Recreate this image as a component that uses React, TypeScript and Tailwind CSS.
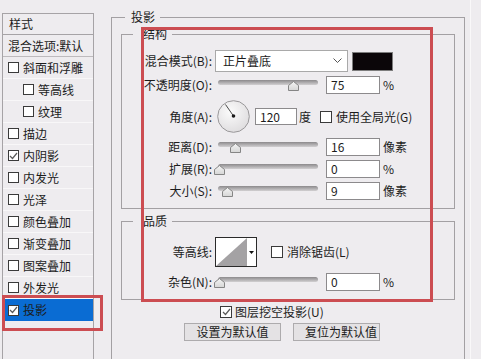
import React from "react";

function Check({ checked, size = "h-[12px] w-[12px]", className = "" }: { checked?: boolean; size?: string; className?: string }) {
  return (
    <span className={`inline-flex shrink-0 items-center justify-center border border-[#3a3a3a] bg-white ${size} ${className}`}>
      {checked && (
        <svg width="9" height="8" viewBox="0 0 9 8">
          <polyline points="1,4 3.5,6.5 8,1" fill="none" stroke="#5a5a5a" strokeWidth="1.2" />
        </svg>
      )}
    </span>
  );
}

function Slider({ thumb }: { thumb: string }) {
  return (
    <div className="relative ml-[6px] h-[18px] w-[100px] shrink-0">
      <div className="absolute left-0 right-0 top-[4px] h-[5px] rounded-full bg-gradient-to-b from-[#8c8a8c] to-[#d2d0d2]" />
      <svg className={`absolute top-[5px] ${thumb}`} width="11" height="10" viewBox="0 0 11 10">
        <defs>
          <linearGradient id="tg" x1="0" y1="0" x2="0" y2="1">
            <stop offset="0" stopColor="#f4f4f4" />
            <stop offset="1" stopColor="#d6d6d6" />
          </linearGradient>
        </defs>
        <polygon points="0.5,9.5 0.5,4.5 5.5,0.5 10.5,4.5 10.5,9.5" fill="url(#tg)" stroke="#858585" strokeWidth="1" />
      </svg>
    </div>
  );
}

function Input({ value, w = "w-[54px]", h = "h-[18px]", className = "" }: { value: string; w?: string; h?: string; className?: string }) {
  return (
    <div className={`flex shrink-0 items-center border border-[#8c8a8c] bg-white pl-[4px] ${w} ${h} ${className}`}>{value}</div>
  );
}

function Label({ text }: { text: string }) {
  return <div className="w-[90px] shrink-0 text-right">{text}</div>;
}

const items: { t: string; sub?: boolean; c?: boolean; sel?: boolean }[] = [
  { t: "斜面和浮雕" },
  { t: "等高线", sub: true },
  { t: "纹理", sub: true },
  { t: "描边" },
  { t: "内阴影", c: true },
  { t: "内发光" },
  { t: "光泽" },
  { t: "颜色叠加" },
  { t: "渐变叠加" },
  { t: "图案叠加" },
  { t: "外发光" },
  { t: "投影", c: true, sel: true },
];

export default function App() {
  return (
    <div className="relative flex h-[359px] w-[481px] overflow-hidden bg-[#eeecef] font-[family-name:'Noto_Sans_CJK_SC',sans-serif] text-[12px] leading-[16px] text-[#1c1c1c]">
      {/* Left style list */}
      <div className="ml-[2px] mt-[13px] flex h-[350px] w-[92px] shrink-0 flex-col border border-[#a6a3a6]">
        <div className="flex h-[21px] shrink-0 items-center border-b border-[#a6a3a6] pl-[6px]">样式</div>
        <div className="flex h-[22px] shrink-0 items-center border-b border-[#bdbabd] pl-[5px]">混合选项:默认</div>
        {items.map((it) => (
          <div
            key={it.t}
            className={`flex h-[22px] shrink-0 items-center ${it.sel ? "bg-[#0a6cd3]" : "border-b border-[#f8f7f8]"}`}
          >
            <Check checked={it.c} size="h-[11px] w-[11px]" className={it.sub ? "ml-[20px]" : "ml-[5px]"} />
            <span className="ml-[4px]">{it.t}</span>
          </div>
        ))}
      </div>

      {/* Drop shadow group */}
      <fieldset className="ml-[17px] mt-[9px] h-[360px] w-[354px] shrink-0 border border-[#a3a0a3] px-[9px]">
        <legend className="ml-[4px] pl-[6px] pr-[5px]">投影</legend>

        <fieldset className="mt-[1px] border border-[#a3a0a3] pb-[8px]">
          <legend className="ml-[11px] pl-[10px] pr-[5px]">结构</legend>

          <div className="mt-[8px] flex h-[22px] items-center">
            <Label text="混合模式(B):" />
            <div className="ml-[3px] flex h-[22px] w-[133px] shrink-0 items-center justify-between border border-[#a9a9a9] bg-white pl-[7px] pr-[5px]">
              <span>正片叠底</span>
              <svg width="9" height="6" viewBox="0 0 9 6">
                <polyline points="0.5,0.5 4.5,4.5 8.5,0.5" fill="none" stroke="#555" strokeWidth="1" />
              </svg>
            </div>
            <div className="ml-[4px] h-[19px] w-[41px] shrink-0 border border-[#7d7d7d] bg-[#0b0609]" />
          </div>

          <div className="mt-[4px] flex h-[18px] items-center">
            <Label text="不透明度(O):" />
            <Slider thumb="left-[70px]" />
            <Input value="75" className="ml-[8px]" />
            <span className="ml-[3px]">%</span>
          </div>

          <div className="mt-[6px] flex h-[33px] items-center">
            <Label text="角度(A):" />
            <svg className="ml-[5px] shrink-0" width="33" height="33" viewBox="0 0 33 33">
              <defs>
                <radialGradient id="dg" cx="0.4" cy="0.35" r="0.7">
                  <stop offset="0" stopColor="#fbfbfb" />
                  <stop offset="1" stopColor="#dedcde" />
                </radialGradient>
              </defs>
              <circle cx="16.5" cy="16.5" r="15.8" fill="url(#dg)" stroke="#9a989a" strokeWidth="1" />
              <line x1="16.5" y1="16" x2="8.5" y2="4.5" stroke="#4a4a4a" strokeWidth="1" />
              <circle cx="16.5" cy="16" r="1.8" fill="#1a1a1a" />
            </svg>
            <Input value="120" w="w-[42px]" h="h-[17px]" className="ml-[5px]" />
            <span className="ml-[2px]">度</span>
            <Check className="ml-[9px]" />
            <span className="ml-[4px]">使用全局光(G)</span>
          </div>

          <div className="mt-[5px] flex h-[18px] items-center">
            <Label text="距离(D):" />
            <Slider thumb="left-[12px]" />
            <Input value="16" className="ml-[8px]" />
            <span className="ml-[3px]">像素</span>
          </div>

          <div className="mt-[4px] flex h-[18px] items-center">
            <Label text="扩展(R):" />
            <Slider thumb="left-[-4px]" />
            <Input value="0" className="ml-[8px]" />
            <span className="ml-[3px]">%</span>
          </div>

          <div className="mt-[4px] flex h-[18px] items-center">
            <Label text="大小(S):" />
            <Slider thumb="left-[4px]" />
            <Input value="9" className="ml-[8px]" />
            <span className="ml-[3px]">像素</span>
          </div>
        </fieldset>

        <fieldset className="mt-[4px] border border-[#a3a0a3] pb-[8px]">
          <legend className="ml-[11px] pl-[10px] pr-[5px]">品质</legend>

          <div className="mt-[8px] flex h-[30px] items-center">
            <Label text="等高线:" />
            <div className="ml-[3px] flex h-[30px] w-[42px] shrink-0 border border-[#2a2a2a] bg-white">
              <svg width="31" height="28" viewBox="0 0 31 28" className="shrink-0">
                <polygon points="0,28 31,0 31,28" fill="#a4a2a4" />
              </svg>
              <div className="flex flex-1 items-center justify-center">
                <svg width="5" height="3" viewBox="0 0 5 3">
                  <polygon points="0,0 5,0 2.5,3" fill="#111" />
                </svg>
              </div>
            </div>
            <Check className="ml-[14px]" />
            <span className="ml-[4px]">消除锯齿(L)</span>
          </div>

          <div className="mt-[6px] flex h-[18px] items-center">
            <Label text="杂色(N):" />
            <Slider thumb="left-[-4px]" />
            <Input value="0" className="ml-[8px]" />
            <span className="ml-[3px]">%</span>
          </div>
        </fieldset>

        <div className="mt-[4px] flex h-[16px] items-center pl-[99px]">
          <Check checked />
          <span className="ml-[3px]">图层挖空投影(U)</span>
        </div>

        <div className="mt-[3px] flex h-[18px] pl-[63px]">
          <div className="flex h-[18px] w-[97px] items-center justify-center border border-[#adabad] bg-[#e4e2e4]">设置为默认值</div>
          <div className="ml-[12px] flex h-[18px] w-[87px] items-center border border-[#adabad] bg-[#e4e2e4] pl-[11px]">复位为默认值</div>
        </div>
      </fieldset>

      <div className="ml-[5px] h-full w-px shrink-0 bg-[#f9f8f9]" />

      {/* Red annotation boxes */}
      <div className="absolute left-[2px] top-[295px] h-[36px] w-[101px] border-[3px] border-[#cc4d52]" />
      <div className="absolute left-[141px] top-[27px] h-[275px] w-[292px] border-[3px] border-[#cc4d52]" />
    </div>
  );
}
